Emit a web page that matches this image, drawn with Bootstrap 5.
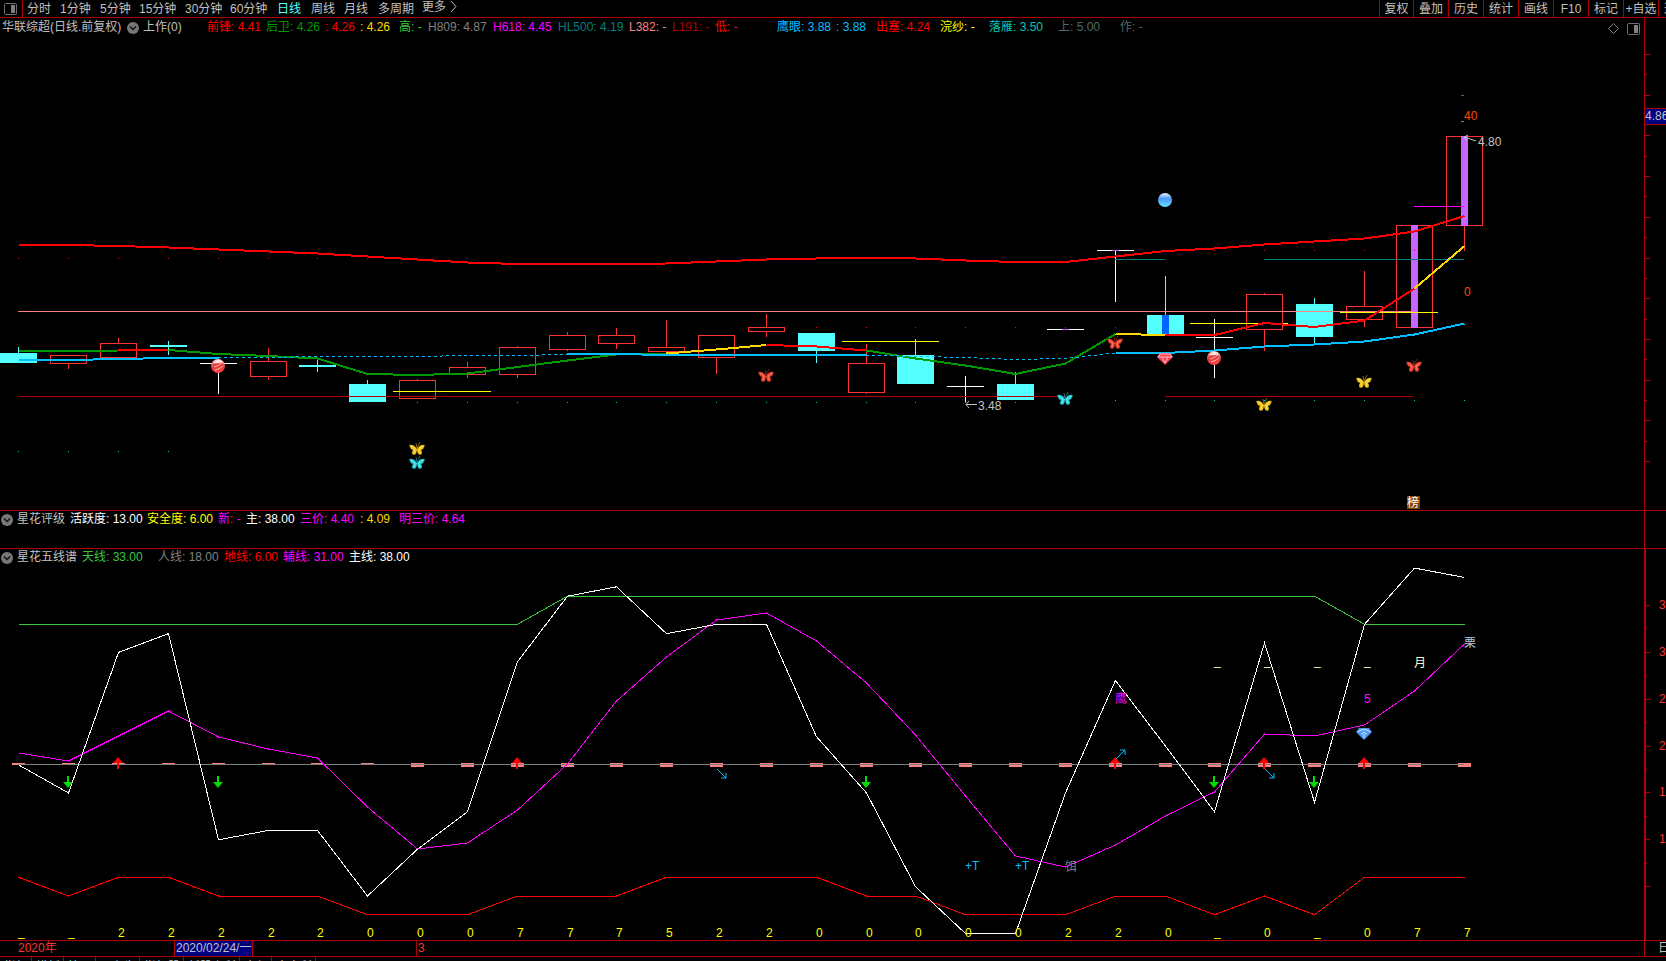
<!DOCTYPE html>
<html lang="zh-CN">
<head>
<meta charset="utf-8">
<meta name="viewport" content="width=device-width, initial-scale=1">
<title>华联综超 日线</title>
<link href="https://cdn.jsdelivr.net/npm/bootstrap@5.3.0/dist/css/bootstrap.min.css" rel="stylesheet">
<style>
  :root { --line: #b00000; --ink: #c0c0c0; }
  body { background: #000; color: var(--ink); font: 12px/15px "Liberation Sans", "Noto Sans CJK SC", sans-serif; overflow: hidden; height: 100vh; }
  /* the page-tab strip runs under the window's lower edge */
  .terminal { height: calc(100vh + 16px); }
  button { background: none; border: 0; padding: 0; color: inherit; font: inherit; line-height: 15px; text-align: left; white-space: nowrap; }
  svg { display: block; }
  .rule-b { border-bottom: 1px solid var(--line); }
  .rule-l { border-left: 1px solid var(--line); }
  .topbar { height: 18px; }
  .side-toggle { width: 23px; border-right: 1px solid var(--line); padding: 0 0 0 4px; }
  .periods { display: grid; grid-template-columns: 33px 40px 39px 46px 45px 47px 34px 33px 34px 44px auto; padding-left: 4px; height: 17px; }
  .periods button, .tools button { line-height: 14px; }
  .periods .current, .pages .current { color: #54ffff; }
  .tools { width: 287px; overflow: hidden; height: 17px; }
  .tools button { flex: 0 0 35px; border-left: 1px solid var(--line); text-align: center; }
  .tools button:first-child { flex-basis: 34px; }
  .pane-main { flex: 492 1 0; min-height: 0; }
  .pane-rating { flex: 0 0 38px; }
  .pane-lines { flex: 392 1 0; min-height: 0; }
  .legend { display: grid; height: 17px; line-height: 17px; white-space: nowrap; overflow: hidden; flex: none; }
  .legend-main { line-height: 19px; grid-template-columns: 125px 16px 64px 59px 59px 35px 39px 29px 65px 65px 71px 43px 43px 62px 59px 40px 64px 49px 69px 62px 1fr; padding-left: 2px; }
  .legend-rating { grid-template-columns: 16px 53px 77px 71px 28px 54px 60px 39px auto; padding-left: 1px; justify-content: start; }
  .legend-lines { grid-template-columns: 16px 65px 76px 66px 59px 66px auto; padding-left: 1px; justify-content: start; }
  .legend button svg { margin-top: 1px; }
  .plot { width: 100%; flex: 1 1 0; min-height: 0; }
  .axis { flex: 0 0 22px; border-left: 1px solid var(--line); }
  .axis-strong { border-left-width: 2px; border-bottom: 1px solid var(--line); }
  .axis svg, .plot { overflow: hidden; }
  .timeline { flex: 0 0 16px; }
  .t-year { padding-left: 18px; width: 174px; color: #ff3232; }
  .t-date { width: 79px; background: #000080; border: solid var(--line); border-width: 0 1px; padding-left: 1px; white-space: nowrap; overflow: hidden; }
  .t-gap { width: 163px; }
  .t-month { padding-left: 1px; color: #ff3232; }
  .t-period { flex: 0 0 22px; padding-left: 13px; white-space: nowrap; overflow: hidden; }
  .pages { flex: 0 0 20px; }
  .pages button { border-right: 1px solid var(--line); padding: 0 3px 0 4px; line-height: 17px; height: 20px; vertical-align: top; }
  .c-red { color: #f00; } .c-green { color: #009a00; } .c-gold { color: #ffd700; } .c-lime { color: #3cc83c; }
  .c-gray { color: #808080; } .c-mag { color: #f0f; } .c-teal { color: #008080; } .c-pink { color: #ff8080; }
  .c-dark { color: #b00000; } .c-sky { color: #00bfff; } .c-yel { color: #ff0; } .c-turq { color: #00c8b4; }
  .c-slate { color: #4f6a6a; } .c-white { color: #fff; }
  svg text { font: 12px "Liberation Sans", "Noto Sans CJK SC", sans-serif; }
</style>
</head>
<body>
<svg width="0" height="0" class="position-absolute" aria-hidden="true">
  <defs>
    <radialGradient id="redBall" cx=".5" cy=".85" r=".9"><stop offset="0" stop-color="#ff4545"/><stop offset=".55" stop-color="#e33a3a"/><stop offset="1" stop-color="#ffd0d0"/></radialGradient>
    <linearGradient id="blueBall" x2="0" y2="1"><stop offset="0" stop-color="#e8f6ff"/><stop offset=".4" stop-color="#4c98f4"/><stop offset="1" stop-color="#66e4ff"/></linearGradient>
    <symbol id="moth" viewBox="-8 -7 16 14" overflow="visible">
      <path d="M0 0C-2-4-5-5-8-4C-7-1-6 1-4 1C-6 3-5 6-3 6C-1 6 0 3 0 1C0 3 1 6 3 6C5 6 6 3 4 1C6 1 7-1 8-4C5-5 2-4 0 0Z" fill="currentColor" stroke="#000" stroke-opacity=".35"/>
      <path d="M0 3V-1L-1-6M0-1L3-7" fill="none" stroke="currentColor" stroke-width=".7" opacity=".75"/>
      <path d="M-6-3L-2 0L-3 4M6-3L2 0L3 4" fill="none" stroke="#fff" stroke-opacity=".3"/>
    </symbol>
    <symbol id="chev" viewBox="0 0 12 12"><circle cx="6" cy="6" r="6" fill="#777"/><path d="M3 4.5L6 7.5L9 4.5" fill="none" stroke="#111" stroke-width="1.5"/></symbol>
    <symbol id="dock" viewBox="0 0 13 12"><rect x=".5" y=".5" width="12" height="11" rx="1" fill="none" stroke="#707070"/><rect x="7" y="2" width="4" height="8" fill="#808080"/></symbol>
  </defs>
</svg>

<div class="terminal d-flex flex-column">
  <header class="topbar rule-b d-flex flex-shrink-0">
    <button class="side-toggle" aria-label="侧栏"><svg width="13" height="12"><use href="#dock"/></svg></button>
    <nav class="periods" aria-label="周期">
      <button>分时</button><button>1分钟</button><button>5分钟</button><button>15分钟</button><button>30分钟</button><button>60分钟</button><button class="current">日线</button><button>周线</button><button>月线</button><button>多周期</button><button class="d-flex gap-1">更多<svg width="7" height="13"><path d="M1 1L6 6.500L1 12" fill="none" stroke="#c0c0c0"/></svg></button>
    </nav>
    <div class="tools d-flex ms-auto">
      <button>复权</button><button>叠加</button><button>历史</button><button>统计</button><button>画线</button><button>F10</button><button>标记</button><button>+自选</button><button>返回</button>
    </div>
  </header>

  <section class="pane-main rule-b d-flex">
    <div class="d-flex flex-column flex-fill">
      <div class="d-flex">
        <div class="legend legend-main flex-fill">
          <span>华联综超(日线.前复权)</span><button aria-label="展开"><svg width="12" height="12"><use href="#chev"/></svg></button><span>上作(0)</span>
          <span class="c-red">前锋: 4.41</span><span class="c-green">后卫: 4.26</span><span class="c-red">: 4.26</span><span class="c-gold">: 4.26</span>
          <span class="c-lime">高: -</span><span class="c-gray">H809: 4.87</span><span class="c-mag">H618: 4.45</span><span class="c-teal">HL500: 4.19</span>
          <span class="c-pink">L382: -</span><span class="c-dark">L191: -</span><span class="c-red">低: -</span>
          <span class="c-sky">鹰眼: 3.88</span><span class="c-sky">: 3.88</span><span class="c-red">出塞: 4.24</span><span class="c-yel">浣纱: -</span>
          <span class="c-turq">落雁: 3.50</span><span class="c-slate">上: 5.00</span><span class="c-slate">作: -</span>
        </div>
        <div class="d-flex align-items-end gap-2 pe-1">
          <button aria-label="标记点"><svg width="11" height="12"><path d="M5.500 .5L10.500 5.500L5.500 10.500L.5 5.500Z" fill="none" stroke="#808080"/></svg></button>
          <button aria-label="右栏"><svg width="13" height="12"><use href="#dock"/></svg></button>
        </div>
      </div>
      <svg class="plot" id="kline" role="img" aria-label="日线"></svg>
    </div>
    <div class="axis"><svg id="priceAxis" width="21" height="100%"></svg></div>
  </section>

  <section class="pane-rating rule-b d-flex">
    <div class="legend legend-rating flex-fill">
      <button aria-label="展开"><svg width="12" height="12"><use href="#chev"/></svg></button><span>星花评级</span><span class="c-white">活跃度: 13.00</span><span class="c-yel">安全度: 6.00</span><span class="c-mag">新: -</span><span class="c-white">主: 38.00</span><span class="c-mag">三价: 4.40</span><span class="c-gold">: 4.09</span><span class="c-mag">明三价: 4.64</span>
    </div>
    <div class="axis"></div>
  </section>

  <section class="pane-lines d-flex">
    <div class="d-flex flex-column flex-fill">
      <div class="legend legend-lines">
        <button aria-label="展开"><svg width="12" height="12"><use href="#chev"/></svg></button><span>星花五线谱</span><span class="c-lime">天线: 33.00</span><span class="c-gray">人线: 18.00</span><span class="c-red">地线: 6.00</span><span class="c-mag">辅线: 31.00</span><span class="c-white">主线: 38.00</span>
      </div>
      <svg class="plot rule-b" id="five" role="img" aria-label="星花五线谱"></svg>
    </div>
    <div class="axis axis-strong rule-b"><svg id="lineAxis" width="20" height="100%"></svg></div>
  </section>

  <div class="timeline rule-b d-flex">
    <span class="t-year">2020年</span><span class="t-date">2020/02/24/一</span><span class="t-gap"></span><span class="t-month rule-l flex-fill">3</span><span class="t-period rule-l">日线</span>
  </div>
  <nav class="pages d-flex" aria-label="指标">
    <button>指标</button><button>模板</button><button class="current">管理</button><button>另存为</button><button>指标股</button><button>新股上所</button><button>全部</button><button>大盘所</button>
  </nav>
</div>

<script src="https://cdn.jsdelivr.net/npm/bootstrap@5.3.0/dist/js/bootstrap.bundle.min.js"></script>
<script>
// type, body top, body bottom, high, low  (r hollow, c filled, w plain cross); fifth: inner bar colour
const candles = [
 ['c',353,363,347,363],['r',355,363,355,369],['r',343,357,338,357],['c',345,347,341,355],['w',363,363,360,394],
 ['r',361,376,348,380],['c',365,367,358,372],['c',384,402,380,402],['r',380,398,379,398],['r',367,374,362,378],
 ['r',347,374,346,378],['r',335,349,332,351],['r',335,343,328,349],['r',347,351,320,351],['r',335,357,335,374],
 ['r',327,331,314,337],['c',333,351,333,363],['r',363,392,344,394],['c',355,384,339,384],['w',386,386,376,402],
 ['c',384,400,372,400],['w',329,329,329,329,'p'],['w',250,250,250,302,'p'],['c',315,334,276,334,'#0064ff'],['w',337,337,319,378],
 ['r',294,329,293,351],['c',304,337,298,343],['r',306,319,271,327],['r',225,327,225,327,'#c864ff'],['r',136,225,136,251,'#c864ff']];
const upper = [245,245,246,247.5,249.5,251.5,253.5,256.5,259.5,262.5,264,264,264,263.5,261.5,259.5,258.5,258,258.5,260.5,262,262,256.5,251,248.5,244.5,241.5,238.5,231.5,216];
const mid = [351,351,350.5,350,354,356,358.5,374,375,373.5,367,360.5,354.5,353.5,349.5,345,346.5,350.5,358.5,365.5,374,363.5,334,335,335,323,327,320.5,288.5,246];
const low = [360,360,359,358,358,357.5,356.5,356.5,356.5,355.5,355.5,354.5,354,355,355,355,355,355,356.5,357.5,359.5,358.5,353,353,350.5,346.5,344.5,341.5,334.5,323.5];
const main = [18,15,30,32,10,11,11,4,9,13,29,36,37,32,33,33,21,15,5,0,0,15,27,20,13,31,14,33,39,38];
const ground = [6,4,6,6,4,4,4,2,2,2,4,4,4,6,6,6,6,4,4,2,2,2,4,4,2,4,2,6,6,6];
const sky = main.map((_, i) => i > 10 && i < 27 ? 36 : 33);
const aux = [753,761,736,711,737,749,758,807,849,843,810,764,701,657,620,613,641,683,735,796,856,867,845,816,792,734,736,725,691,644];
const score = '__22222000777522000002' + '20_0_077';

const NS = 'http://www.w3.org/2000/svg';
const color = { cyan:'#54ffff', red:'#ff3232', purple:'#c864ff', green:'#009a00', gold:'#ffd700', blue:'#00bfff' };

// A drawing surface whose data space (width x height from y0) follows the element's size
function surface(svg, w, y0, h) {
  svg.replaceChildren();
  const b = svg.getBoundingClientRect(), kx = b.width / w, ky = b.height / h;
  const X = i => Math.round((18.3 + 49.84 * i) * kx), Y = y => (y - y0) * ky;
  const add = (tag, attrs, text) => {
    const e = document.createElementNS(NS, tag);
    for (const k in attrs) e.setAttribute(k, attrs[k]);
    if (text) e.textContent = text;
    return svg.appendChild(e);
  };
  const box = (x, y, w, h, fill) => add('rect', { x, y: Math.round(Y(y)), width: w, height: h, fill, 'shape-rendering':'crispEdges' });
  return { X, Y, add, box,
    path: (ys, from, to, stroke, width, dash) => add('polyline', {
      points: ys.slice(from, to + 1).map((y, k) => (X(from + k) + .5) + ',' + Y(y)).join(' '),
      fill:'none', stroke, 'stroke-width': width, 'shape-rendering':'crispEdges', ...(dash ? {'stroke-dasharray': dash} : {}) }),
    level: (y, a, b, fill, pad = 0) => box(X(a) - pad, y, X(b) - X(a) + 2 * pad, 1, fill),
    label: (i, y, t, fill, dx = 0) => add('text', { x: X(i) + dx, y: Y(y) + 4, fill }, t) };
}

function drawKline() {
  const s = surface(document.getElementById('kline'), 1644, 35, 475), { X, Y } = s;
  candles.forEach(([t, top, bottom, hi, lo, inner], i) => {
    const x = X(i), c = t === 'c' ? color.cyan : t === 'r' ? color.red : '#fff';
    if (t === 'r') {
      s.box(x, hi, 1, top - hi, c);
      s.box(x, bottom, 1, lo - bottom, c);
      s.add('rect', { x: x - 17.5, y: Math.round(Y(top)) + .5, width: 36, height: Math.round(Y(bottom) - Y(top)), fill:'none', stroke: c, 'shape-rendering':'crispEdges' });
    } else {
      s.box(x, hi, 1, lo - hi, c);
      s.box(x - 18, top, 37, Math.max(1, bottom - top), c);
    }
    if (inner === 'p') s.box(x - 3, top, 7, 1, color.purple);
    else if (inner) s.box(x - 3, top, 7, bottom - top + 1, inner);
  });
  const dots = (y, a, b, c) => { for (let i = a; i <= b; i++) s.box(X(i), y, 1, 1, c); };
  dots(258, 0, 9, '#f00'); dots(327, 16, 22, '#f00'); dots(250, 24, 28, '#f00');
  dots(451, 0, 3, '#00c8b4'); dots(402, 8, 20, '#00c8b4'); dots(400, 22, 29, '#00c8b4');
  s.level(311, 0, 28, '#ff8080');
  s.level(396, 0, 21, '#b00000'); s.level(396, 23, 28, '#b00000');
  s.level(259, 22, 23, '#008080'); s.level(259, 25, 29, '#008080');
  s.level(206, 28, 29, '#f0f');
  [[391,8,9],[341,17,18],[323,24,25],[312,27,28]].forEach(([y, a, b]) => s.level(y, a, b, '#ff0', 24));
  s.path(upper, 0, 29, '#f00', 2);
  [[0,2,'green'],[2,3,'#f00'],[3,13,'green'],[13,15,'gold'],[15,17,'#f00'],[17,22,'green'],[22,23,'gold'],[23,28,'#f00'],[28,29,'gold']]
    .forEach(([a, b, c]) => s.path(mid, a, b, color[c] || c, 2));
  [[0,4],[11,17],[22,29]].forEach(([a, b]) => s.path(low, a, b, color.blue, 2));
  [[4,11],[17,22]].forEach(([a, b]) => s.path(low, a, b, color.blue, 1, '3 3'));

  const at = (i, y) => `translate(${X(i)} ${Y(y)})`;
  [[8,449,'#f2c61c'],[8,463,'#2ad6e0'],[15,376,'#f0442e'],[21,399,'#2ad6e0'],[22,343,'#f0442e'],[25,405,'#f2c61c'],[27,382,'#f2c61c'],[28,366,'#f0442e']]
    .forEach(([i, y, c]) => s.add('use', { href:'#moth', x: X(i) - 8, y: Y(y) - 7, width: 16, height: 14, color: c }));
  [[4,366],[24,358]].forEach(([i, y]) => {
    s.add('circle', { cx: X(i), cy: Y(y), r: 7, fill:'url(#redBall)' });
    s.add('path', { d:'M-4 1Q1 0 5-4M-3 4Q2 3 5 0', transform: at(i, y), stroke:'#ffb4b4', 'stroke-width': 1, fill:'none' });
    s.add('path', { d:'M-5-3Q0-9 5-4Q0-2-5-3Z', transform: at(i, y), fill:'#ffe4e4' });
  });
  s.add('circle', { cx: X(23), cy: Y(200), r: 7, fill:'url(#blueBall)' });
  s.add('path', { d:'M-5-6H5L8-2L0 6L-8-2Z', transform: at(23, 359), fill:'#ff3c50' });
  s.add('path', { d:'M-5-5H5L7-2H-7ZM-3-2L0 4L3-2', transform: at(23, 359), fill:'none', stroke:'#ffc0c8' });

  s.box(X(29) - 3, 95, 3, 1, '#4f6a6a'); s.box(X(29) - 3, 121, 3, 1, '#808080');
  s.label(29, 116, '40', '#ff4500'); s.label(29, 292, '0', '#ff4500');
  s.label(29, 142, '4.80', '#c0c0c0', 14); s.label(19, 406, '3.48', '#c0c0c0', 13);
  s.add('path', { d:'M12 4L0 0M4-2L0 0L3 4', transform: at(29, 137), stroke:'#c0c0c0', fill:'none' });
  s.add('path', { d:'M12 .5H1M4-3L1 .5L4 4', transform: at(19, 404), stroke:'#c0c0c0', fill:'none' });
  s.box(X(28) - 7, 496, 13, 13, '#804000');
  s.label(28, 502.500, '榜', '#fff', -7);
}

function drawFive() {
  const s = surface(document.getElementById('five'), 1644, 566, 375), { X, Y } = s;
  const toY = v => v.map(n => 933.5 - n * 9.37);
  for (let i = 0; i < 30; i++) i < 8 ? s.box(X(i) - 6, 763, 13, i ? 1 : 2, '#ff8080') : s.box(X(i) - 6, 763, 13, 4, '#ff8080');
  s.level(764, 0, 29, '#808080');
  s.path(toY(sky), 0, 29, '#3cc83c', 1);
  s.path(toY(ground), 0, 29, '#f00', 1);
  s.path(aux, 0, 29, '#f0f', 1);
  s.path(toY(main), 0, 29, '#fff', 1);
  const at = (i, y) => `translate(${X(i)} ${Y(y)})`;
  [1,4,17,24,26].forEach(i => s.add('path', { d:'M-1-6H1V0H5L0 6L-5 0H-1Z', transform: at(i, 782), fill:'#00dc00' }));
  [2,10,22,25,27].forEach(i => s.add('path', { d:'M-1 6H1V0H5L0-6L-5 0H-1Z', transform: at(i, 763), fill:'#f00' }));
  [[14,769,1],[25,769,1],[22,759,-1]].forEach(([i, y, d]) =>
    s.add('path', { d:`M1 0L10 ${9*d}M10 ${4*d}V${9*d}H5`, transform: at(i, y), fill:'none', stroke:'#00bfff' }));
  s.add('path', { d:'M-5-6H5L8-2L0 6L-8-2Z', transform: at(27, 734), fill:'#4c98f4' });
  s.add('path', { d:'M-6-2Q0-7 6-2M-3 0Q0-3 3 0M0 0V4', transform: at(27, 734), fill:'none', stroke:'#cfe8ff' });
  [...score].forEach((c, i) => s.label(i, c === '_' ? 932 : 933, c, '#ff0'));
  [24,25,26,27].forEach(i => s.label(i, 661, '_', '#fffacd'));
  s.label(28, 663, '月', '#fffacd'); s.label(29, 643, '栗', '#b0c4de');
  s.label(22, 699, '鹰', '#f0f'); s.label(27, 699, '5', '#f0f');
  s.label(19, 866, '+T', '#00bfff'); s.label(20, 866, '+T', '#00bfff'); s.label(21, 867, '饵', '#708090');
}

function drawAxes() {
  const p = surface(document.getElementById('priceAxis'), 21, 18, 492);
  for (let k = 0; k <= 20; k++) p.box(0, 54 + 20.35 * k, k % 2 ? 2 : 5, 1, '#b00000');
  p.box(0, 108, 21, 17, '#b00000'); p.box(0, 109, 21, 15, '#000080');
  p.add('text', { x: 0, y: p.Y(116) + 4, fill:'#c0c0c0' }, '4.86');
  const q = surface(document.getElementById('lineAxis'), 20, 549, 391);
  for (let k = 0; k <= 12; k++) {
    q.box(0, 605 + 23.43 * k, k % 2 ? 1 : 4, 1, '#b00000');
    if (k % 2 === 0 && k < 12) q.add('text', { x: 13, y: q.Y(605 + 23.43 * k) + 4, fill:'#ff3232' }, String(35 - 2.5 * k));
  }
}
function draw() { drawKline(); drawFive(); drawAxes(); }
draw();
addEventListener('resize', draw);
</script>
</body>
</html>
